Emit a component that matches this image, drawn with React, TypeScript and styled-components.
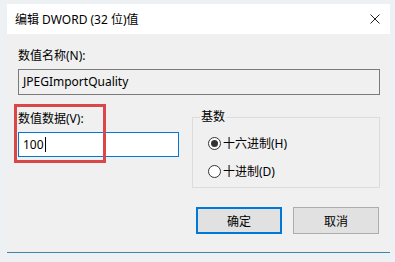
import React from "react";
import styled, { createGlobalStyle } from "styled-components";

const Global = createGlobalStyle`
  html, body { margin: 0; padding: 0; }
  body {
    background: #eef1f3;
    font-family: "Noto Sans", "Noto Sans CJK SC", sans-serif;
    font-size: 12px;
    color: #000;
    width: 395px;
    height: 262px;
    overflow: hidden;
  }
`;

const Window = styled.div`
  margin: 4px 0 0 7px;
  width: 383px;
  display: flex;
  flex-direction: column;
`;

const TitleBar = styled.div`
  height: 30px;
  background: #ffffff;
  display: flex;
  align-items: center;
  justify-content: space-between;
  padding: 0 10px 0 8px;
  font-size: 12px;
  color: #000;
`;

const CloseIcon = styled.svg`
  width: 10px;
  height: 10px;
  display: block;
`;

const Body = styled.div`
  background: #f0f0f0;
  padding: 14px 10px 18px 11px;
  border-bottom: 1px solid #3f84ab;
  display: flex;
  flex-direction: column;
`;

const Label = styled.div`
  line-height: 16px;
  height: 16px;
  white-space: nowrap;
`;

const TextBox = styled.div<{ $focused?: boolean }>`
  box-sizing: border-box;
  height: ${(p) => (p.$focused ? 25 : 26)}px;
  margin-top: 5px;
  border: 1px solid ${(p) => (p.$focused ? "#0078d7" : "#7a7a7a")};
  background: ${(p) => (p.$focused ? "#ffffff" : "#f0f0f0")};
  display: flex;
  align-items: center;
  padding-left: 4px;
  line-height: 16px;
`;

const Caret = styled.span`
  display: inline-block;
  width: 1px;
  height: 15px;
  background: #000;
  margin-left: 1px;
`;

const Row = styled.div`
  display: grid;
  grid-template-columns: 161px 188px;
  column-gap: 13px;
  margin-top: 14px;
`;

const LeftCol = styled.div`
  position: relative;
  padding-top: 2px;
  display: flex;
  flex-direction: column;
`;

const Highlight = styled.div`
  position: absolute;
  left: -4px;
  top: -5px;
  width: 92px;
  height: 59px;
  box-sizing: border-box;
  border: 3px solid #d9474b;
  pointer-events: none;
`;

const Group = styled.fieldset`
  margin: 0;
  padding: 10px 8px 8px 7px;
  border: 1px solid #dcdcdc;
  display: flex;
  flex-direction: column;
  gap: 12px;
  min-width: 0;
`;

const Legend = styled.legend`
  padding: 0 1px;
  line-height: 16px;
`;

const RadioRow = styled.div`
  display: flex;
  align-items: center;
  gap: 2px;
  height: 16px;
  margin-left: 8px;
  white-space: nowrap;
`;

const RadioCircle = styled.span<{ $checked?: boolean }>`
  box-sizing: border-box;
  width: 13px;
  height: 13px;
  border-radius: 50%;
  border: 1px solid #333;
  background: #fff;
  display: flex;
  align-items: center;
  justify-content: center;
  &::after {
    content: "";
    width: 7px;
    height: 7px;
    border-radius: 50%;
    background: ${(p) => (p.$checked ? "#333" : "transparent")};
  }
`;

const ButtonRow = styled.div`
  display: flex;
  justify-content: flex-end;
  gap: 11px;
  margin-top: 19px;
  padding-right: 1px;
`;

const Button = styled.div<{ $primary?: boolean }>`
  box-sizing: border-box;
  width: 86px;
  height: 27px;
  background: #e1e1e1;
  border: ${(p) => (p.$primary ? "2px solid #0078d7" : "1px solid #adadad")};
  display: flex;
  align-items: center;
  justify-content: center;
`;

export default function App() {
  return (
    <>
      <Global />
      <Window>
        <TitleBar>
          <span>编辑 DWORD (32 位)值</span>
          <CloseIcon viewBox="0 0 10 10">
            <path d="M0.5 0.5 L9.5 9.5 M9.5 0.5 L0.5 9.5" stroke="#222" strokeWidth="1" fill="none" />
          </CloseIcon>
        </TitleBar>
        <Body>
          <Label>数值名称(N):</Label>
          <TextBox>JPEGImportQuality</TextBox>
          <Row>
            <LeftCol>
              <Highlight />
              <Label>数值数据(V):</Label>
              <TextBox $focused>
                100
                <Caret />
              </TextBox>
            </LeftCol>
            <Group>
              <Legend>基数</Legend>
              <RadioRow>
                <RadioCircle $checked />
                <span>十六进制(H)</span>
              </RadioRow>
              <RadioRow>
                <RadioCircle />
                <span>十进制(D)</span>
              </RadioRow>
            </Group>
          </Row>
          <ButtonRow>
            <Button $primary>确定</Button>
            <Button>取消</Button>
          </ButtonRow>
        </Body>
      </Window>
    </>
  );
}
